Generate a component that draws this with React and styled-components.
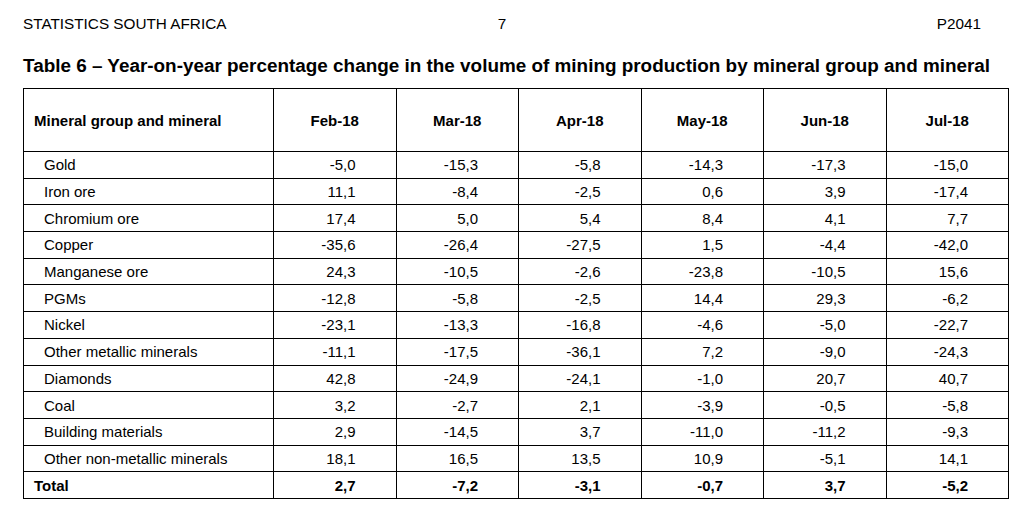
import React from 'react';
import styled, { createGlobalStyle } from 'styled-components';

const rows = [
  ['Gold', '-5,0', '-15,3', '-5,8', '-14,3', '-17,3', '-15,0'],
  ['Iron ore', '11,1', '-8,4', '-2,5', '0,6', '3,9', '-17,4'],
  ['Chromium ore', '17,4', '5,0', '5,4', '8,4', '4,1', '7,7'],
  ['Copper', '-35,6', '-26,4', '-27,5', '1,5', '-4,4', '-42,0'],
  ['Manganese ore', '24,3', '-10,5', '-2,6', '-23,8', '-10,5', '15,6'],
  ['PGMs', '-12,8', '-5,8', '-2,5', '14,4', '29,3', '-6,2'],
  ['Nickel', '-23,1', '-13,3', '-16,8', '-4,6', '-5,0', '-22,7'],
  ['Other metallic minerals', '-11,1', '-17,5', '-36,1', '7,2', '-9,0', '-24,3'],
  ['Diamonds', '42,8', '-24,9', '-24,1', '-1,0', '20,7', '40,7'],
  ['Coal', '3,2', '-2,7', '2,1', '-3,9', '-0,5', '-5,8'],
  ['Building materials', '2,9', '-14,5', '3,7', '-11,0', '-11,2', '-9,3'],
  ['Other non-metallic minerals', '18,1', '16,5', '13,5', '10,9', '-5,1', '14,1'],
];

const total = ['Total', '2,7', '-7,2', '-3,1', '-0,7', '3,7', '-5,2'];
const months = ['Feb-18', 'Mar-18', 'Apr-18', 'May-18', 'Jun-18', 'Jul-18'];

const GlobalStyle = createGlobalStyle`
  body {
    margin: 0;
    background: #fff;
    color: #000;
    font-family: "Liberation Sans", Arial, sans-serif;
  }
`;

const Page = styled.div`
  padding: 15px 10px 0 23px;
`;

const RunningHead = styled.header`
  display: grid;
  grid-template-columns: 1fr auto 1fr;
  padding-right: 27px;
  font-size: 15.3px;
  line-height: 17px;
  span:last-child {
    text-align: right;
  }
`;

const Caption = styled.h1`
  margin: 23px 0 0;
  font-size: 18.9px;
  line-height: 22px;
  font-weight: bold;
  white-space: nowrap;
`;

const Table = styled.table`
  margin-top: 11px;
  width: 986px;
  border-collapse: collapse;
  table-layout: fixed;
  font-size: 15px;
  col:first-child {
    width: 250px;
  }
`;

const HeadCell = styled.th`
  height: 62px;
  border: 1px solid #000;
  padding: 0 0 0 ${p => (p.$label ? '10px' : '0')};
  text-align: ${p => (p.$label ? 'left' : 'center')};
  font-weight: bold;
`;

const Row = styled.tr`
  height: 26.7px;
  font-weight: ${p => (p.$total ? 'bold' : 'normal')};
`;

const Name = styled.td`
  border: 1px solid #000;
  padding: 0 0 0 ${p => (p.$total ? '10px' : '20px')};
`;

const Value = styled.td`
  border: 1px solid #000;
  padding: 0 40px 0 0;
  text-align: right;
`;

function DataRow({ cells, total: isTotal }) {
  const [name, ...values] = cells;
  return (
    <Row $total={isTotal}>
      <Name $total={isTotal}>{name}</Name>
      {values.map((v, i) => (
        <Value key={i}>{v}</Value>
      ))}
    </Row>
  );
}

export default function App() {
  return (
    <Page>
      <GlobalStyle />
      <RunningHead>
        <span>STATISTICS SOUTH AFRICA</span>
        <span>7</span>
        <span>P2041</span>
      </RunningHead>
      <Caption>
        Table 6 – Year-on-year percentage change in the volume of mining production by mineral group and mineral
      </Caption>
      <Table>
        <colgroup>
          <col />
          {months.map(m => (
            <col key={m} />
          ))}
        </colgroup>
        <thead>
          <tr>
            <HeadCell $label>Mineral group and mineral</HeadCell>
            {months.map(m => (
              <HeadCell key={m}>{m}</HeadCell>
            ))}
          </tr>
        </thead>
        <tbody>
          {rows.map(r => (
            <DataRow key={r[0]} cells={r} />
          ))}
          <DataRow cells={total} total />
        </tbody>
      </Table>
    </Page>
  );
}
